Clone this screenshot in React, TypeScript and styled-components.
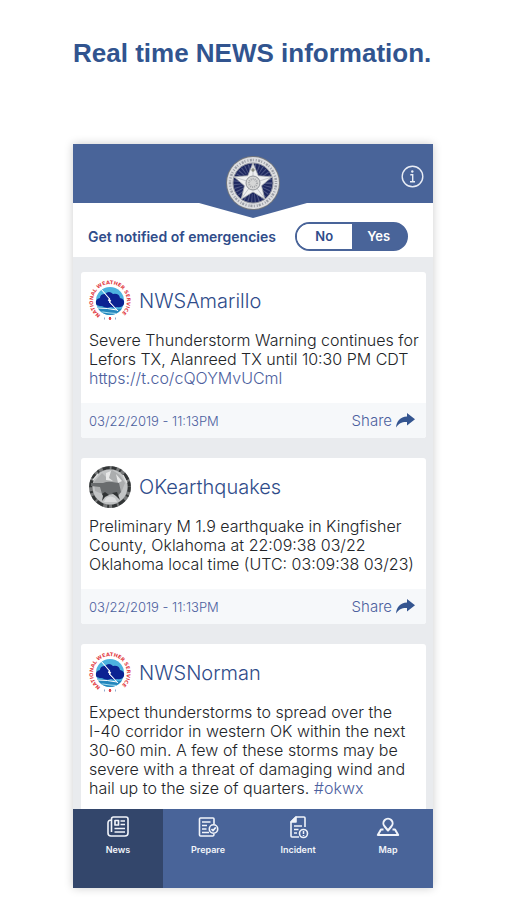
import React, { useId, useState } from "react";
import styled, { createGlobalStyle } from "styled-components";

const colors = {
  brand: "#496499",
  brandDark: "#33466b",
  ink: "#2f4c8a",
  link: "#4c609e",
  text: "#222428",
  canvas: "#e9ebee",
  footer: "#f6f8fa",
};

const GlobalStyle = createGlobalStyle`
  *, *::before, *::after { box-sizing: border-box; }
  body {
    margin: 0;
    background: #fff;
    font-family: Inter, "Liberation Sans", sans-serif;
  }
`;

const Page = styled.main`
  padding: 35px 73px 12px;
`;

const Title = styled.h1`
  margin: 0 0 73px;
  color: #31548f;
  font: 700 26px/36px "Liberation Sans", sans-serif;
  white-space: nowrap;
`;

const Phone = styled.section`
  display: flex;
  flex-direction: column;
  background: ${colors.canvas};
  box-shadow: 0 0 9px rgba(0, 0, 0, 0.2);
`;

const Header = styled.header`
  position: relative;
  display: flex;
  align-items: center;
  justify-content: flex-end;
  height: 59px;
  padding: 5px 9px 0 0;
  background: ${colors.brand};
`;

const Crest = styled.div`
  position: absolute;
  top: 10px;
  left: 50%;
  transform: translateX(-50%);
  svg { display: block; }
`;

const InfoButton = styled.button`
  display: flex;
  padding: 0;
  border: 0;
  background: none;
  color: #e9edf5;
  cursor: pointer;
`;

const NotifyBar = styled.div`
  display: flex;
  align-items: center;
  justify-content: space-between;
  height: 54px;
  padding: 12px 25px 0 15px;
  background: #fff;
`;

const NotifyLabel = styled.span`
  color: ${colors.ink};
  font-size: 14px;
  font-weight: 600;
  white-space: nowrap;
`;

const Toggle = styled.div`
  display: flex;
  width: 113px;
  height: 29px;
  overflow: hidden;
  border: 2px solid ${colors.brand};
  border-radius: 15px;
  background: linear-gradient(90deg, #fff 50%, ${colors.brand} 50%);
`;

const Option = styled.label`
  display: flex;
  flex: 1;
  align-items: center;
  justify-content: center;
  background: #fff;
  color: ${colors.ink};
  font-size: 13px;
  font-weight: 600;
  cursor: pointer;
  &:has(input:checked) {
    background: ${colors.brand};
    color: #fff;
  }
  input {
    width: 0;
    height: 0;
    margin: 0;
    appearance: none;
  }
`;

const Feed = styled.div`
  display: flex;
  flex-direction: column;
  gap: 20px;
  padding: 15px 7px 0 8px;
`;

const Card = styled.article<{ $open?: boolean }>`
  overflow: hidden;
  border-radius: ${(p) => (p.$open ? "3px 3px 0 0" : "3px")};
  background: #fff;
`;

const CardHead = styled.div`
  display: flex;
  align-items: center;
  gap: 8px;
  padding: 8px 8px 9px;
  svg { display: block; flex: none; overflow: visible; }
`;

const Source = styled.h2`
  margin: 0;
  color: ${colors.ink};
  font-size: 20px;
  font-weight: 300;
  line-height: 24px;
`;

const Message = styled.p<{ $open?: boolean }>`
  margin: 0;
  padding: 0 8px ${(p) => (p.$open ? 11 : 15)}px;
  color: ${colors.text};
  font-size: 16px;
  font-weight: 300;
  line-height: 19px;
  white-space: nowrap;
  a {
    color: ${colors.link};
    text-decoration: none;
  }
`;

const CardFoot = styled.footer`
  display: flex;
  align-items: center;
  justify-content: space-between;
  height: 35px;
  padding: 0 11px 0 8px;
  background: ${colors.footer};
  color: ${colors.link};
  font-size: 13px;
  font-weight: 300;
`;

const ShareButton = styled.button`
  display: flex;
  align-items: center;
  gap: 4px;
  padding: 0;
  border: 0;
  background: none;
  color: ${colors.link};
  font: 300 15px/20px Inter, sans-serif;
  cursor: pointer;
`;

const TabBar = styled.nav`
  display: flex;
  height: 79px;
  background: ${colors.brand};
`;

const Tab = styled.a<{ $active?: boolean }>`
  display: flex;
  flex: 1;
  flex-direction: column;
  align-items: center;
  gap: 5px;
  padding-top: 6px;
  background: ${(p) => (p.$active ? colors.brandDark : "transparent")};
  color: #f1f4fa;
  font-size: 9px;
  font-weight: 600;
  line-height: 12px;
  text-decoration: none;
`;

const starPoints = (cx: number, cy: number, outer: number, inner: number) =>
  Array.from({ length: 10 }, (_, i) => {
    const r = i % 2 ? inner : outer;
    const a = (i * Math.PI) / 5 - Math.PI / 2;
    return `${(cx + r * Math.cos(a)).toFixed(2)},${(cy + r * Math.sin(a)).toFixed(2)}`;
  }).join(" ");

const CrestIcon = () => (
  <svg width="108" height="64" viewBox="0 0 108 64" aria-hidden="true">
    <path d="M0 49 L54 64 L108 49Z" fill={colors.brand} />
    <circle cx="54" cy="29" r="27" fill="#74777c" />
    <circle cx="54" cy="29" r="26" fill="#dcdde0" />
    <circle cx="54" cy="29" r="23" fill="none" stroke="#9b9ea6" strokeWidth="2.5" strokeDasharray="1 1.5 2 1 1 2" />
    <circle cx="54" cy="29" r="20" fill="#1e2860" stroke="#8f929d" strokeWidth="1" />
    <circle cx="54" cy="29" r="15" fill="none" stroke="#7b83a8" strokeWidth="8" strokeDasharray="1 2" opacity=".5" />
    <polygon points={starPoints(54, 29, 20, 9)} fill="#eeeff0" stroke="#a5a8ad" strokeWidth=".8" />
    <path d="M54 9V29L35 23M54 29L73 23M54 29L42 45M54 29L66 45" stroke="#b9bbc0" strokeWidth=".8" fill="none" />
    <circle cx="54" cy="29" r="7" fill="#d5d6d6" stroke="#92959a" />
    <circle cx="54" cy="29" r="4" fill="none" stroke="#a4a6a9" strokeWidth="2" strokeDasharray="1 1" />
    <circle cx="54" cy="16" r="1.7" fill="#898b83" />
  </svg>
);

const InfoIcon = () => (
  <svg width="23" height="23" viewBox="0 0 23 23" fill="none" stroke="currentColor" aria-hidden="true">
    <circle cx="11.5" cy="11.5" r="10.3" strokeWidth="1.4" />
    <circle cx="11.3" cy="6.5" r="1.2" fill="currentColor" stroke="none" />
    <path d="M9.3 9.7h2.4v6.8M9 16.7h5" strokeWidth="1.4" />
  </svg>
);

const WeatherLogo = () => {
  const id = useId();
  return (
    <svg width="42" height="42" viewBox="0 0 42 42" aria-hidden="true">
      <defs>
        <path id={`${id}ring`} d="M11.5 35.2A17 17 0 1 1 30.5 35.2" />
        <clipPath id={`${id}disc`}><circle cx="21" cy="21" r="14" /></clipPath>
      </defs>
      <g clipPath={`url(#${id}disc)`}>
        <path d="M5 5h32v32H5z" fill="#4db2df" />
        <path d="M5 28q8-3 16 0t16-1v10H5z" fill="#2487bd" />
        <path d="M7 33q7-2 14 0t14-2" fill="none" stroke="#a9dff0" strokeWidth="1" />
      </g>
      <path d="M7 24q-1-5 4-6 0-4 5-4 4-4 8 0 6-1 7 4 5 1 4 6-2 4-7 3-3 1-6 0-5 2-9-1-5 0-6-2Z" fill="#0c2292" />
      <path d="M12 9l9 10-2 1 10 11-9-9 2-1Z" fill="#fff" stroke="#fff" strokeWidth=".7" />
      <path d="M9 28q9 0 19 2" fill="none" stroke="#fff" strokeWidth="1" />
      <text fill="#df3a43" fontFamily="DejaVu Sans" fontSize="5" fontWeight="700">
        <textPath href={`#${id}ring`}>NATIONAL WEATHER SERVICE</textPath>
      </text>
      <path d="M20 38l1-1 1 1-1 2Z" fill="#df3a43" stroke="#df3a43" />
      <path d="M15 38.5h1M26 38.5h1" stroke="#8ea9cc" strokeWidth="2" />
    </svg>
  );
};

const QuakeLogo = () => (
  <svg width="42" height="42" viewBox="0 0 42 42" aria-hidden="true">
    <circle cx="21" cy="21" r="21" fill="#77797a" />
    <circle cx="21" cy="21" r="19.3" fill="none" stroke="#333637" strokeWidth="3" strokeDasharray="5 3 2 4 7 2" />
    <circle cx="21" cy="21" r="17.5" fill="#c2c4c5" />
    <path d="M5 16l8-9 4 4 6-7 8 5 5 8-4 10-6-3-10 5-10-4Z" fill="#abadae" />
    <path d="M17 7l5-2-2 7 4 3-7-1ZM27 8l6 7-4 2Z" fill="#e7e8e8" />
    <path d="M2 17h12q5-2 9-1l7 1 2 9-3 4-5-2-5 1-6-1-2-7-9-1Z" fill="#696c6e" />
    <path d="M13 28l3-2 4 3-4 2-3 4 1-5ZM23 27l5-1 3 8-4-4Z" fill="#303334" />
    <path d="M17 32q4-3 9 0l2 4H15Z" fill="#dcddde" />
    <path d="M4 14l5-6M34 9l4 8" stroke="#e0e1e1" strokeWidth="1.3" />
  </svg>
);

const ShareIcon = () => (
  <svg width="19" height="15" viewBox="0 0 19 15" fill="#345590" aria-hidden="true">
    <path d="M11 0l8 6.3-8 6.2V9C6 8.7 3 10.3 0 14.5.8 8 4 4 11 3.6Z" />
  </svg>
);

const lineIcon = {
  width: 24,
  height: 24,
  viewBox: "0 0 24 24",
  fill: "none",
  stroke: "currentColor",
  strokeWidth: 1.6,
  strokeLinejoin: "round" as const,
  "aria-hidden": true,
};

const NewsIcon = () => (
  <svg {...lineIcon}>
    <path d="M5.500 5V4q0-2 2-2H20q2 0 2 2v14q0 3-3 3H5q-3 0-3-3V8q0-3 3.500-3v12" />
    <path d="M9 5.500h3.500V10H9zM14.500 6H19M14.500 9.500H19M8.500 13.500H19M8.500 17H19" strokeWidth="1.7" />
  </svg>
);

const PrepareIcon = () => (
  <svg {...lineIcon}>
    <path d="M18 9V4q0-1-1-1H4.500q-1 0-1 1v16q0 1 1 1H17q1 0 1-2" />
    <path d="M6 7h8.500M6 10.500h5M6 14h4.500M6 17.500h7" />
    <circle cx="17.500" cy="14" r="4.200" />
    <path d="M15.500 14l1.500 1.600 2.800-3.200" />
  </svg>
);

const IncidentIcon = () => (
  <svg {...lineIcon}>
    <path d="M19 12V3q0-1-1-1H10L5 7v14q0 1 1 1h7" />
    <path d="M10 2v5H5Z" fill="currentColor" />
    <path d="M8 11h8M8 14.500h4.500M8 18h3" strokeWidth="1.5" />
    <circle cx="17.500" cy="18.500" r="4" />
    <path d="M17.500 16v3M17.500 20v1" strokeWidth="1.5" />
  </svg>
);

const MapIcon = () => (
  <svg {...lineIcon} strokeWidth={2}>
    <path d="M12 15.500L8.700 11.500A4.600 4.600 0 1 1 15.300 11.500Z" />
    <path d="M7.500 14.500H5L1.800 20h20.400L19 14.500h-2.500" />
  </svg>
);

const tabs = [
  { name: "News", Icon: NewsIcon },
  { name: "Prepare", Icon: PrepareIcon },
  { name: "Incident", Icon: IncidentIcon },
  { name: "Map", Icon: MapIcon },
];

const posts = [
  {
    source: "NWSAmarillo",
    Logo: WeatherLogo,
    date: "03/22/2019 - 11:13PM",
    body: (
      <>
        Severe Thunderstorm Warning continues for<br />
        Lefors TX, Alanreed TX until 10:30 PM CDT<br />
        <a href="https://t.co/cQOYMvUCml">https://t.co/cQOYMvUCml</a>
      </>
    ),
  },
  {
    source: "OKearthquakes",
    Logo: QuakeLogo,
    date: "03/22/2019 - 11:13PM",
    body: (
      <>
        Preliminary M 1.9 earthquake in Kingfisher<br />
        County, Oklahoma at 22:09:38 03/22<br />
        Oklahoma local time (UTC: 03:09:38 03/23)
      </>
    ),
  },
  {
    source: "NWSNorman",
    Logo: WeatherLogo,
    date: null,
    body: (
      <>
        Expect thunderstorms to spread over the<br />
        I-40 corridor in western OK within the next<br />
        30-60 min. A few of these storms may be<br />
        severe with a threat of damaging wind and<br />
        hail up to the size of quarters. <a href="#okwx">#okwx</a>
      </>
    ),
  },
];

export default function App() {
  const [notify, setNotify] = useState("Yes");
  return (
    <Page>
      <GlobalStyle />
      <Title>Real time NEWS information.</Title>
      <Phone>
        <Header>
          <Crest><CrestIcon /></Crest>
          <InfoButton type="button" aria-label="Information"><InfoIcon /></InfoButton>
        </Header>
        <NotifyBar>
          <NotifyLabel id="notify-label">Get notified of emergencies</NotifyLabel>
          <Toggle role="radiogroup" aria-labelledby="notify-label">
            {["No", "Yes"].map((value) => (
              <Option key={value}>
                <input
                  type="radio"
                  name="notify"
                  value={value}
                  checked={notify === value}
                  onChange={() => setNotify(value)}
                />
                {value}
              </Option>
            ))}
          </Toggle>
        </NotifyBar>
        <Feed>
          {posts.map(({ source, Logo, body, date }) => (
            <Card key={source} $open={!date}>
              <CardHead>
                <Logo />
                <Source>{source}</Source>
              </CardHead>
              <Message $open={!date}>{body}</Message>
              {date && (
                <CardFoot>
                  <time dateTime="2019-03-22T23:13">{date}</time>
                  <ShareButton type="button">Share <ShareIcon /></ShareButton>
                </CardFoot>
              )}
            </Card>
          ))}
        </Feed>
        <TabBar>
          {tabs.map(({ name, Icon }, i) => (
            <Tab key={name} href={`#${name.toLowerCase()}`} $active={i === 0} aria-current={i === 0 ? "page" : undefined}>
              <Icon />
              {name}
            </Tab>
          ))}
        </TabBar>
      </Phone>
    </Page>
  );
}
